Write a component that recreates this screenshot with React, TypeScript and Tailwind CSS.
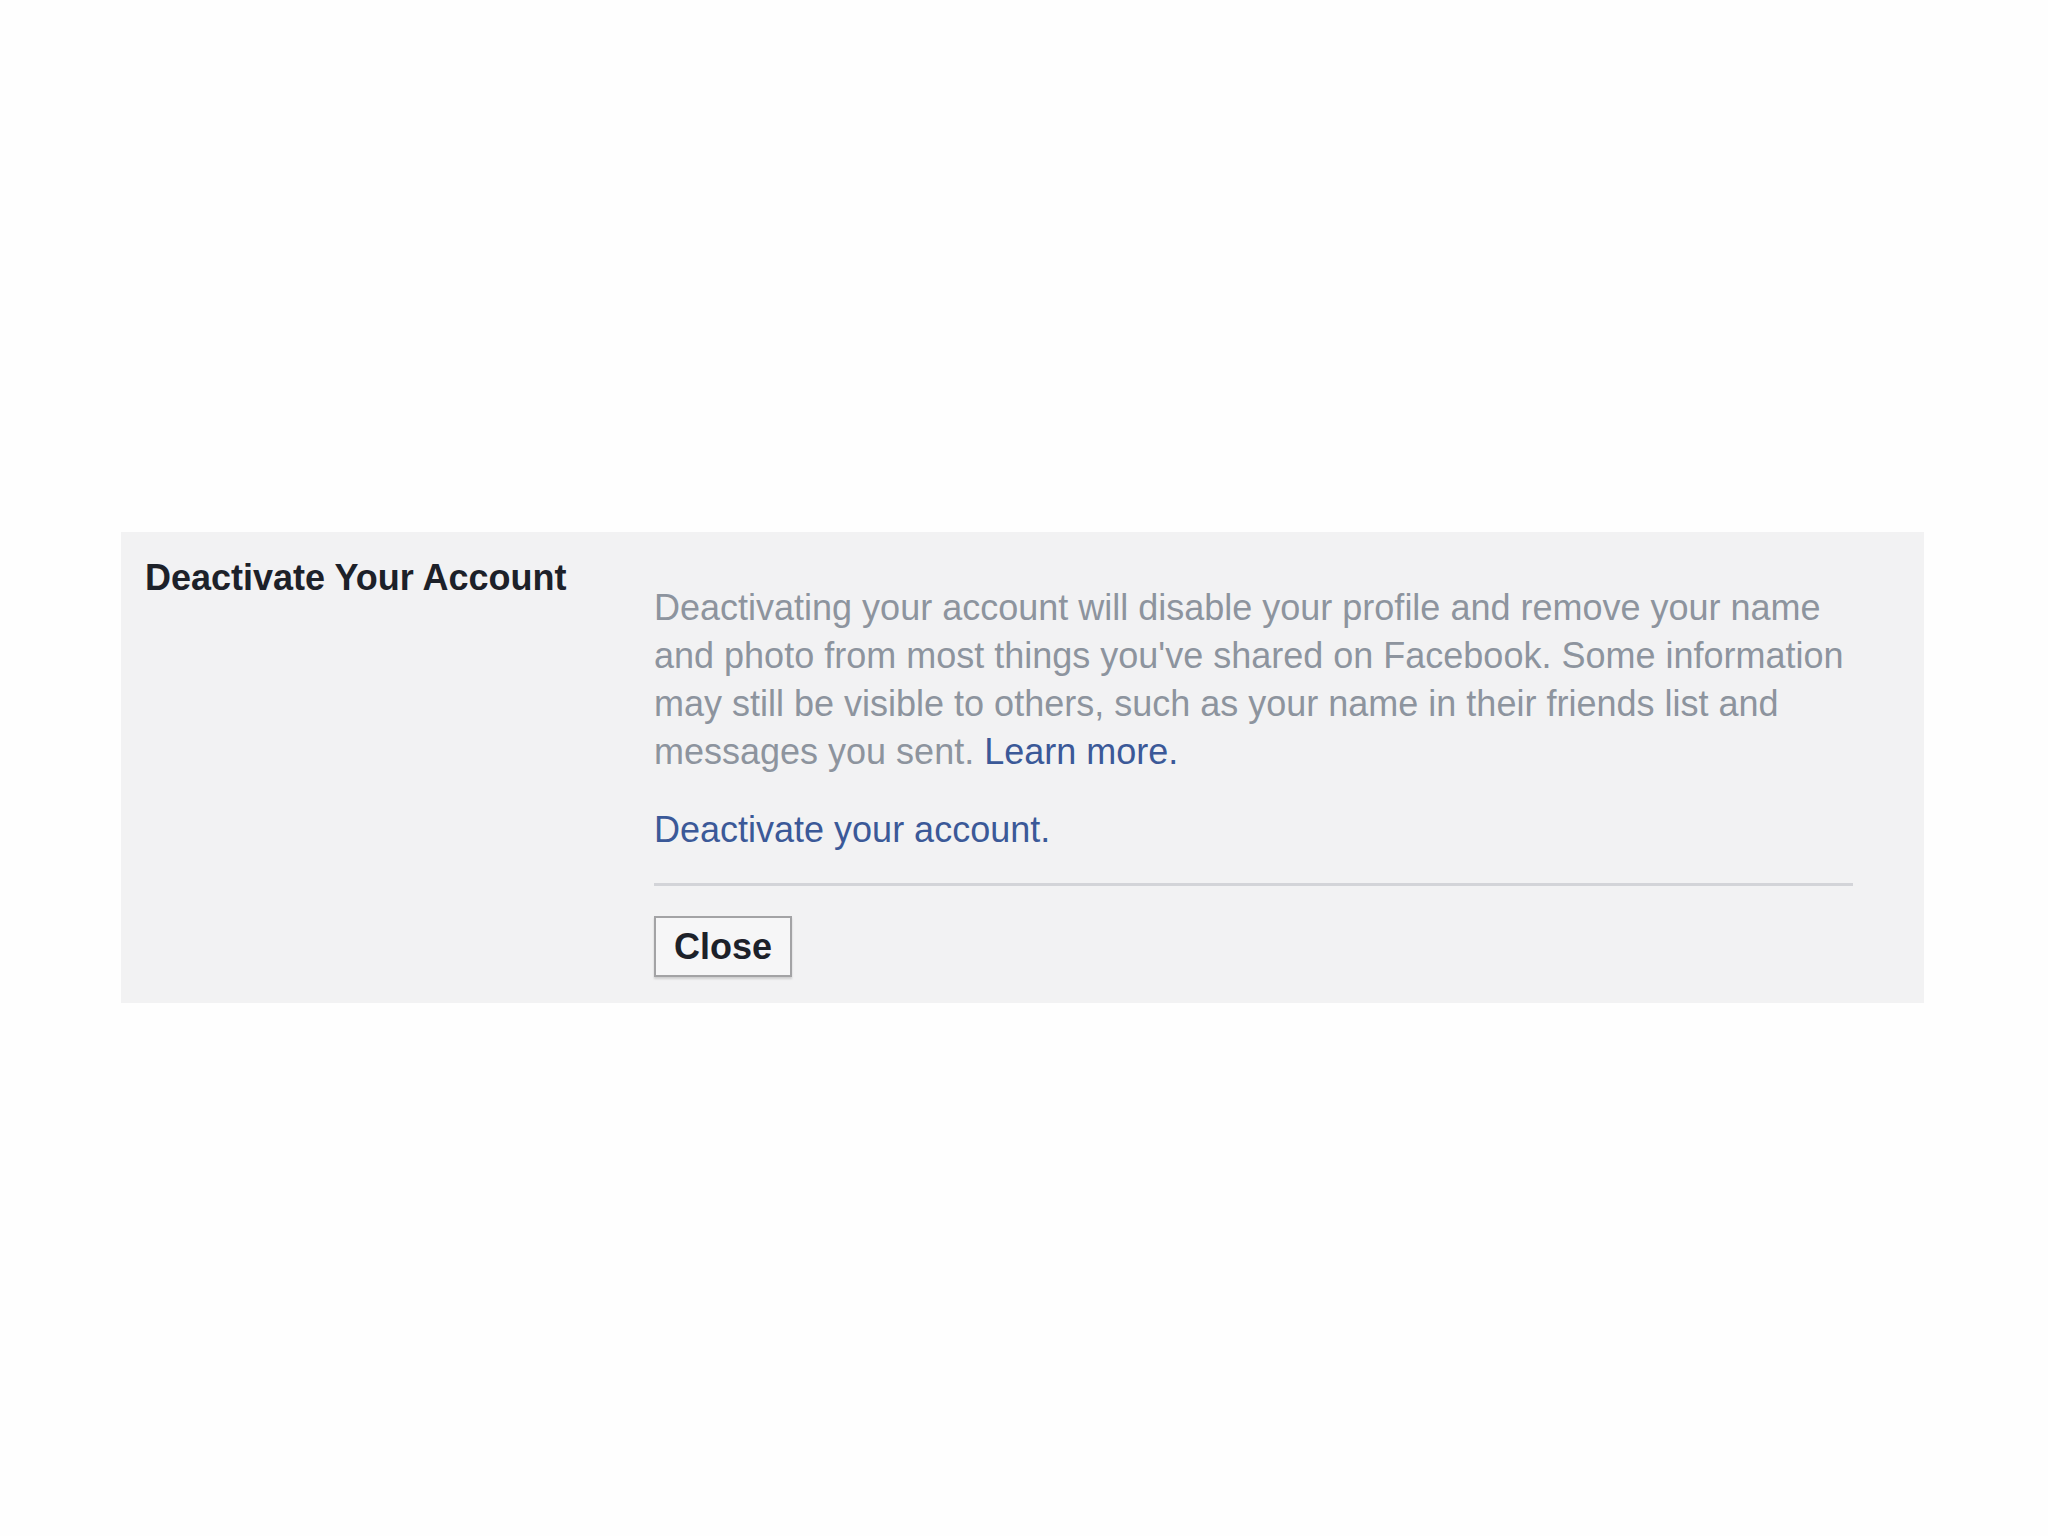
import React from 'react';

const font = { fontFamily: '"Liberation Sans", Arial, Helvetica, sans-serif' };

const DeactivatePanel: React.FC = () => {
  return (
    <div className="ml-[121px] flex w-[1803px] items-start bg-[#f2f2f3] pt-[22px] pb-[26px] pl-[24px]">
      <div className="w-[509px] shrink-0">
        <h3 className="text-[36px] leading-[48px] font-bold text-[#1d2129]">Deactivate Your Account</h3>
      </div>

      <div className="w-[1199px] pt-[30px]">
        <p className="text-[36px] leading-[48px] text-[#8d949e]">
          Deactivating your account will disable your profile and remove your name and photo from most
          things you've shared on Facebook. Some information may still be visible to others, such as your
          name in their friends list and messages you sent.{' '}
          <a href="#" className="text-[#3b5998]">Learn more.</a>
        </p>

        <div className="mt-[30px] text-[36px] leading-[48px]">
          <a href="#" className="text-[#3b5998]">Deactivate your account.</a>
        </div>

        <div className="mt-[29px] h-[3px] bg-[#d3d4d8]" />

        <button
          type="button"
          className="mt-[30px] flex h-[61px] w-[138px] items-center justify-center border-2 border-[#a3a3a5] bg-[#f6f6f7] text-[36px] font-bold text-[#1d2129] shadow-[0_2px_2px_rgba(0,0,0,0.15)]"
        >
          Close
        </button>
      </div>
    </div>
  );
};

export default function App() {
  return (
    <div className="min-h-[1536px] w-full bg-[#fefefe] pt-[532px]" style={font}>
      <DeactivatePanel />
    </div>
  );
}
